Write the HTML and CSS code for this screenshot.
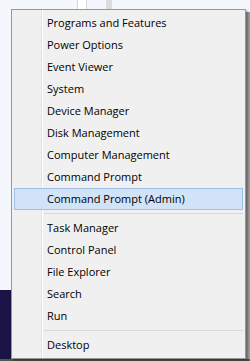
FILE: index.html
```html
<!DOCTYPE html>
<html>
<head>
<meta charset="UTF-8">
<link rel="stylesheet" href="styles.css">
<title>Quick Link Menu</title>
</head>
<body>
<div class="desk">
  <div class="bg-scroll"></div>
  <div class="bg-bar"></div>
  <div class="bg-navy"></div>
  <div class="bg-right"></div>
  <div class="bg-bottom"></div>

  <div class="menu">
    <div class="item">Programs and Features</div>
    <div class="item">Power Options</div>
    <div class="item">Event Viewer</div>
    <div class="item">System</div>
    <div class="item">Device Manager</div>
    <div class="item">Disk Management</div>
    <div class="item">Computer Management</div>
    <div class="item">Command Prompt</div>
    <div class="item hot">Command Prompt (Admin)</div>
    <div class="sep"></div>
    <div class="item">Task Manager</div>
    <div class="item">Control Panel</div>
    <div class="item">File Explorer</div>
    <div class="item">Search</div>
    <div class="item">Run</div>
    <div class="sep"></div>
    <div class="item">Desktop</div>
  </div>
</div>
</body>
</html>
```

FILE: styles.css
```css
body {
    margin: 0;
    background-color: #f4f7fb;
    font-family: "Open Sans", "Noto Sans", sans-serif;
    font-size: 11px;
    color: #000;
}

.desk {
    position: relative;
    width: 250px;
    height: 361px;
    overflow: hidden;
}

/* bits of the windows behind the menu */
.bg-scroll {
    position: absolute;
    left: 77px;
    top: 0;
    width: 8px;
    height: 9px;
    background-color: #fff;
    border-left: 1px solid #d4d8dd;
    border-right: 1px solid #d4d8dd;
}
.bg-bar {
    position: absolute;
    left: 106px;
    top: 0;
    width: 6px;
    height: 9px;
    background-color: #dcdcdc;
}
.bg-navy {
    position: absolute;
    left: 0;
    top: 290px;
    width: 11px;
    height: 71px;
    background-color: #1b1246;
}
.bg-right {
    position: absolute;
    left: 246px;
    top: 12px;
    width: 4px;
    height: 349px;
    background-color: #9d9d9d;
}
.bg-bottom {
    position: absolute;
    left: 0;
    top: 359px;
    width: 250px;
    height: 2px;
    background-color: #505a48;
}

.menu {
    position: relative;
    box-sizing: border-box;
    margin: 9px 0 0 11px;
    width: 235px;
    padding: 2px;
    border: 1px solid #979797;
    background: linear-gradient(to right, transparent 29px, #e2e3e3 29px, #e2e3e3 30px, #fff 30px, #fff 31px, transparent 31px), #f0f0f0;
    box-shadow: 2px 2px 2px rgba(0, 0, 0, 0.35);
}

.item {
    box-sizing: border-box;
    height: 22px;
    line-height: 20px;
    padding-left: 32px;
    border: 1px solid transparent;
    white-space: nowrap;
}

.item.hot {
    background-color: #d1e3f6;
    border-color: #9dbfe7;
}

.sep {
    height: 0;
    margin: 3px 0 3px 30px;
    border-top: 1px solid #d7d7d7;
}
```
